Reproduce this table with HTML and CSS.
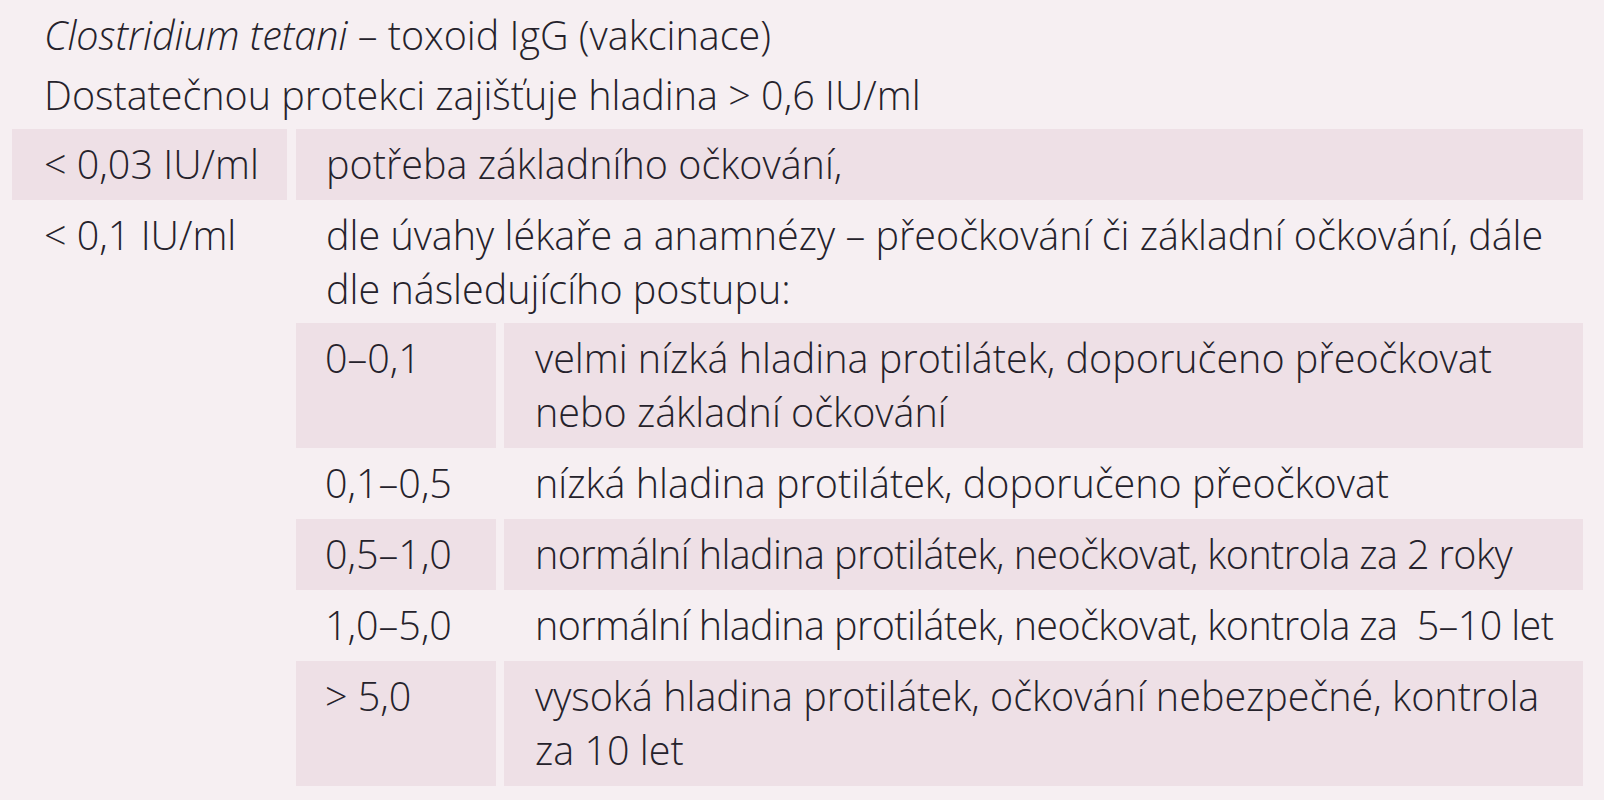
FILE: index.html
```html
<!DOCTYPE html>
<html lang="cs">
<head>
<meta charset="utf-8">
<title>Clostridium tetani</title>
<link rel="stylesheet" href="styles.css">
</head>
<body>
<div class="page">
  <div class="head">
    <div class="line"><em>Clostridium tetani</em> – toxoid IgG (vakcinace)</div>
    <div class="line">Dostatečnou protekci zajišťuje hladina &gt; 0,6 IU/ml</div>
  </div>
  <div class="tbl">
    <div class="row shaded">
      <div class="cell key">&lt; 0,03 IU/ml</div>
      <div class="cell val">potřeba základního očkování,</div>
    </div>
    <div class="row">
      <div class="cell key">&lt; 0,1 IU/ml</div>
      <div class="cell val nest-wrap">
        <div class="intro">dle úvahy lékaře a anamnézy – přeočkování či základní očkování, dále<br>dle následujícího postupu:</div>
        <div class="sub">
          <div class="row shaded">
            <div class="cell skey">0–0,1</div>
            <div class="cell sval">velmi nízká hladina protilátek, doporučeno přeočkovat<br>nebo základní očkování</div>
          </div>
          <div class="row">
            <div class="cell skey">0,1–0,5</div>
            <div class="cell sval">nízká hladina protilátek, doporučeno přeočkovat</div>
          </div>
          <div class="row shaded">
            <div class="cell skey">0,5–1,0</div>
            <div class="cell sval tight">normální hladina protilátek, neočkovat, kontrola za 2 roky</div>
          </div>
          <div class="row">
            <div class="cell skey">1,0–5,0</div>
            <div class="cell sval tight">normální hladina protilátek, neočkovat, kontrola za&nbsp; 5–10 let</div>
          </div>
          <div class="row shaded">
            <div class="cell skey">&gt; 5,0</div>
            <div class="cell sval">vysoká hladina protilátek, očkování nebezpečné, kontrola<br>za 10 let</div>
          </div>
        </div>
      </div>
    </div>
  </div>
</div>
</body>
</html>
```
FILE: styles.css
```css
html, body {
  margin: 0;
  padding: 0;
  background: #f6eff2;
}
body {
  font-family: "Open Sans", "Noto Sans", sans-serif;
  font-weight: 300;
  font-size: 39.5px;
  color: #25222b;
  width: 1604px;
  height: 800px;
  overflow: hidden;
}
.page {
  padding: 5px 0 0 12px;
  width: 1571px;
}
.head {
  padding-left: 32px;
  padding-bottom: 4px;
}
.head .line {
  line-height: 60px;
  white-space: nowrap;
}
.head em {
  font-style: italic;
}
.tbl {
  width: 1571px;
}
.row {
  display: grid;
  grid-template-columns: 275px minmax(0, 1fr);
  column-gap: 9px;
}
.cell {
  line-height: 54px;
  padding: 8px 30px 9px 32px;
  white-space: nowrap;
  min-width: 0;
}
.shaded > .cell {
  background: #eee0e6;
}
.val {
  padding-left: 30px;
}
.nest-wrap {
  padding: 8px 0 0 0;
  overflow: hidden;
}
.intro {
  padding: 0 30px 7px 30px;
}
.sub {
  width: 1287px;
}
.sub .row {
  grid-template-columns: 200px minmax(0, 1fr);
  column-gap: 8px;
}
.sub .cell {
  padding: 8px 30px 9px 29px;
}
.sub .sval {
  padding-left: 31px;
  padding-right: 0;
  overflow: hidden;
}
.tight {
  letter-spacing: -0.6px;
}
```
